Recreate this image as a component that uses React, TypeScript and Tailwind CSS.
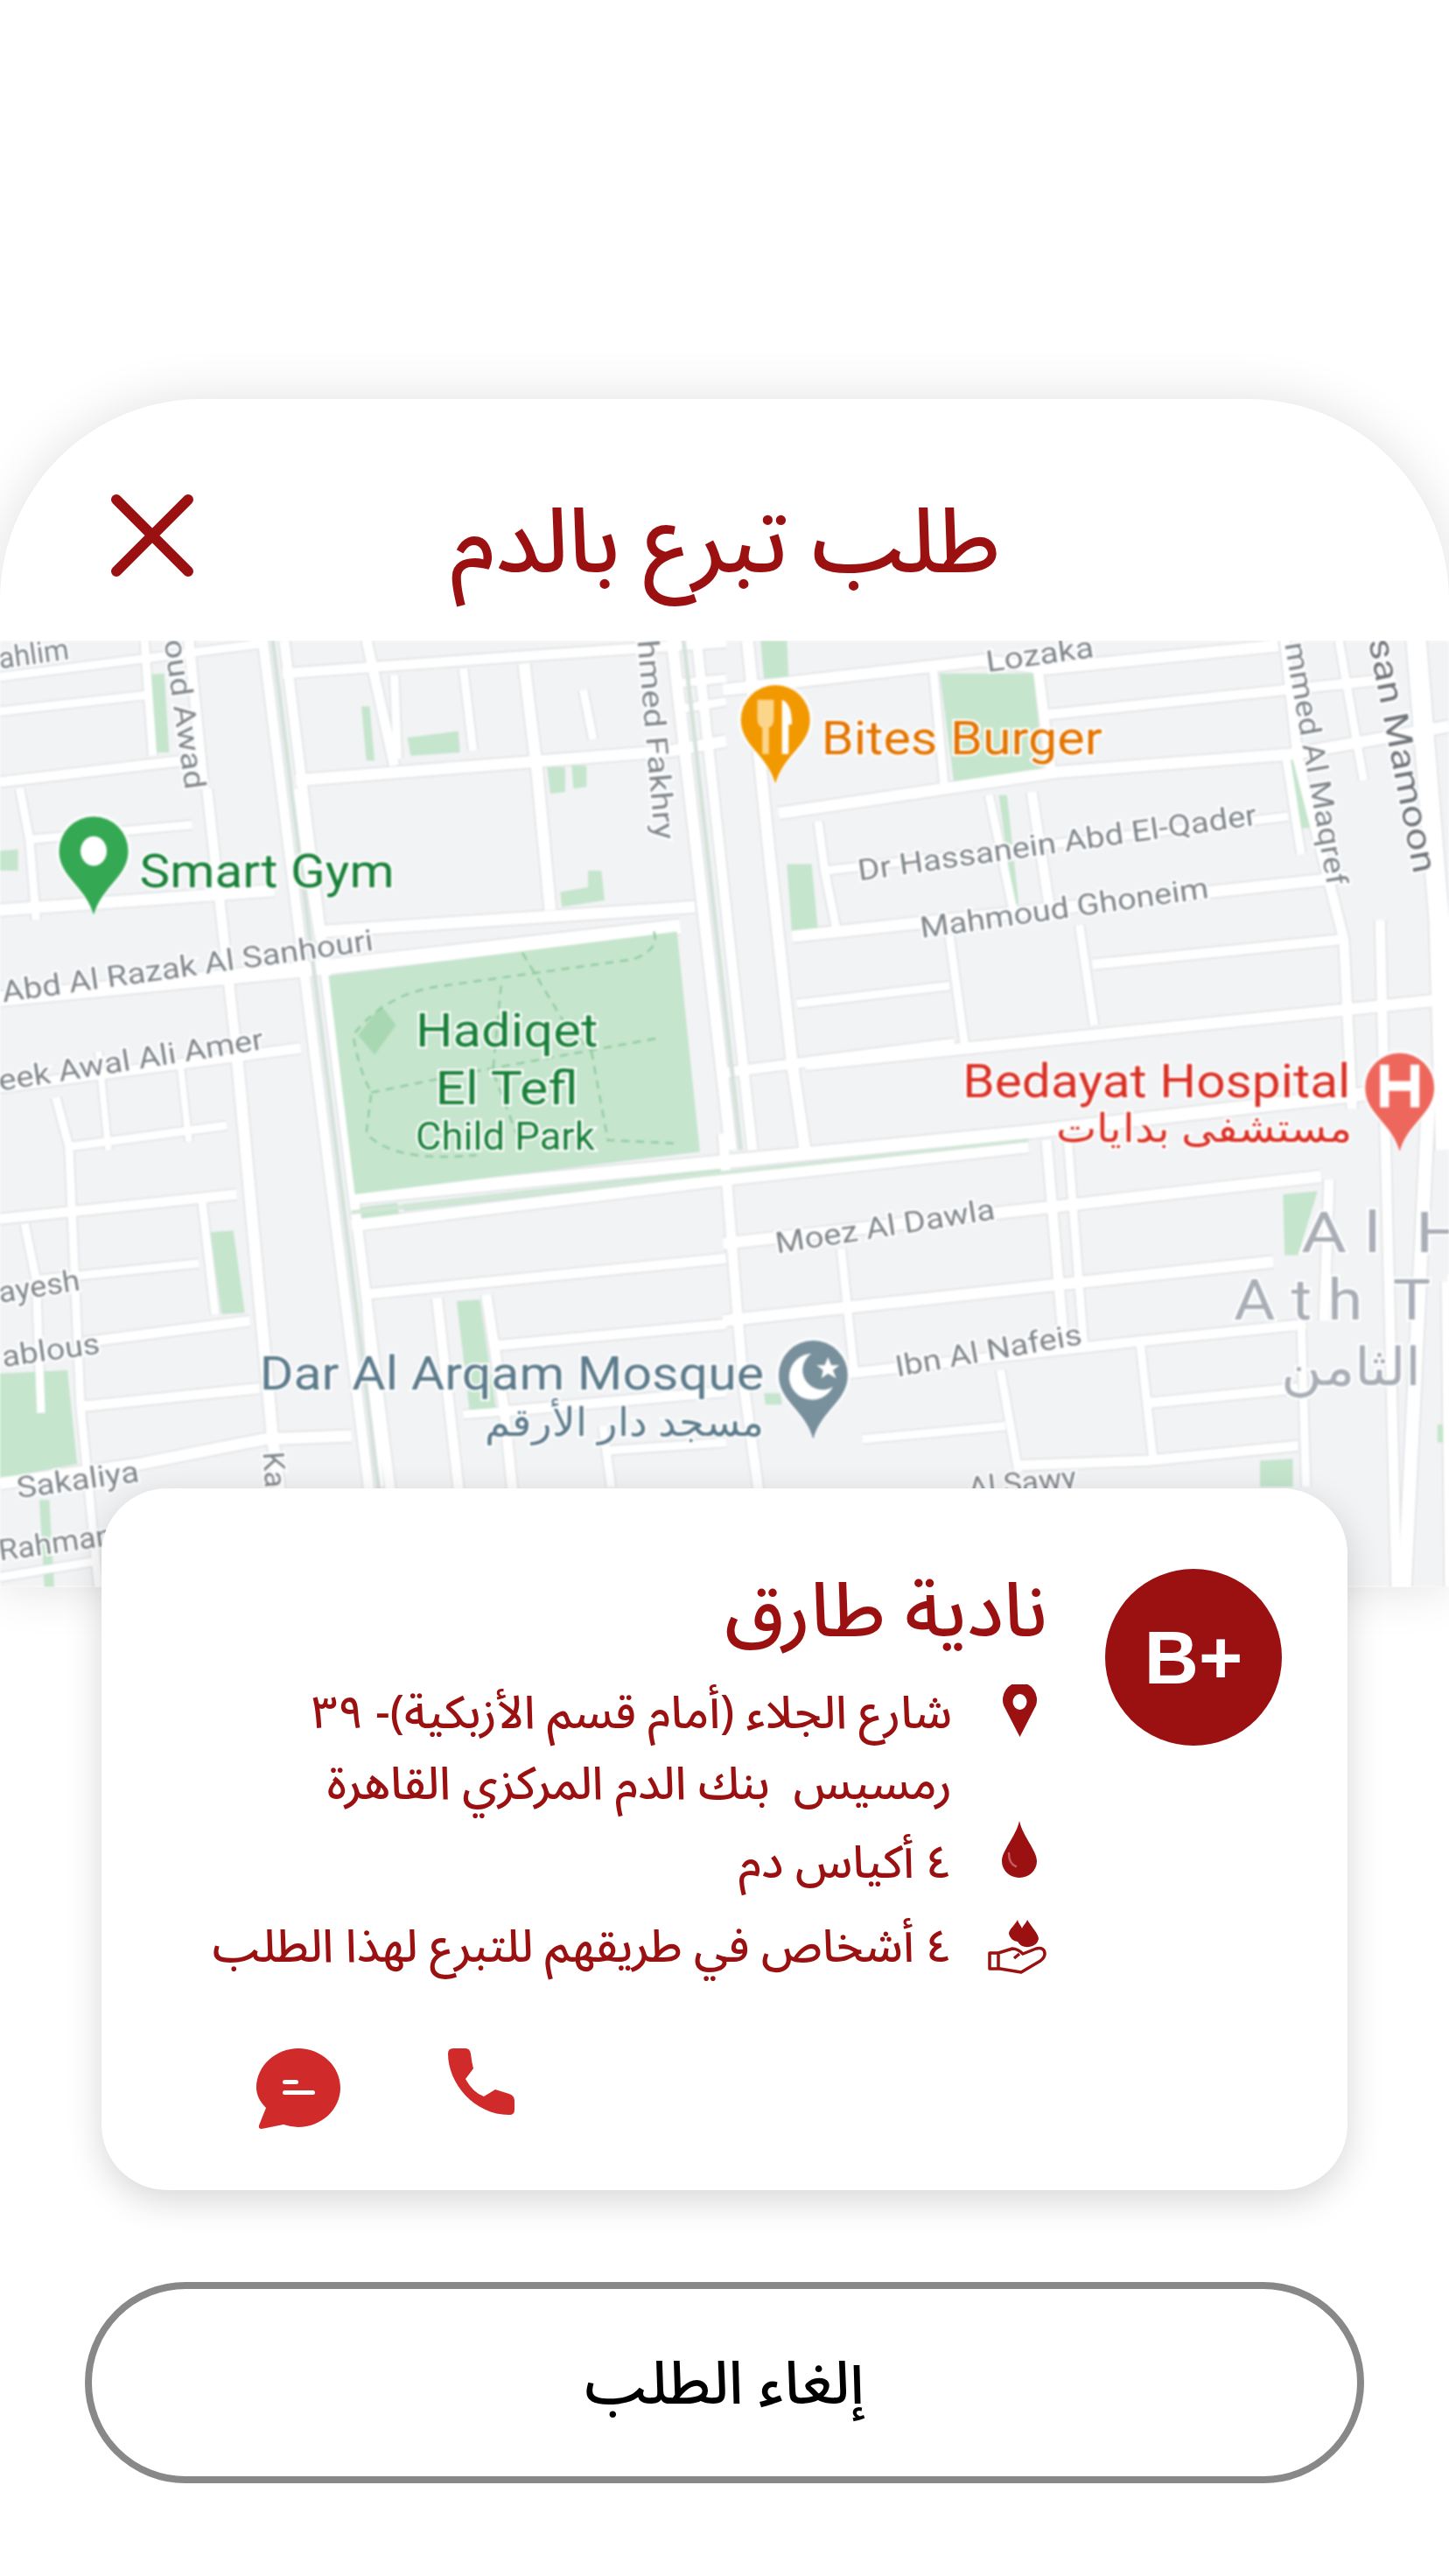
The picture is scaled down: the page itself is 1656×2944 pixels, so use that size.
const roads: [string, number][] = [
  // left side, running across
  ['0,412 158,392', 5], ['0,433 90,423', 5], ['0,476 120,462', 6], ['18,511 117,502', 5], ['0,554 167,542', 7],
  ['0,608 186,590 414,564', 9], ['0,662 183,638', 6], ['42,698 138,685', 5], ['0,742 144,727', 6], ['22,779 121,769', 5],
  ['51,817 152,804', 6], ['51,856 158,845', 6], ['0,903 85,891 161,876 214,874', 7], ['0,960 60,950', 5],
  // left side, running down
  ['88,390 93,460', 5], ['115,390 124,480', 6], ['12,480 18,511 22,560', 5], ['34,668 42,698 49,856 60,966', 5],
  ['123,731 131,800', 5], ['144,640 166,876 178,966', 7], ['15,745 22,779 25,860', 5], ['126,480 144,640', 6],
  ['60,640 66,700', 4], ['110,650 115,695', 4],
  // dual road through the middle left
  ['160,390 232,966', 6], ['173,390 245,966', 6],
  // upper middle
  ['172,410 310,400 442,391', 6], ['180,475 319,464 409,457 442,451', 7], ['195,567 423,552', 7],
  ['223,389 240,466', 6], ['319,404 327,470 335,554', 7], ['282,407 288,457', 5], ['355,420 361,450', 5], ['240,411 242,462', 5],
  ['180,480 195,572', 6], ['412,416 442,413', 5], ['417,431 442,427', 5],
  ['409,389 445,700', 7], ['424,389 458,700', 6],
  // wide road under the park
  ['214,729 442,707 626,689 882,660', 8], ['214,746 442,718 626,698', 7],
  ['220,788 442,766', 6], ['302,819 442,806', 6], ['307,859 442,847', 6], ['282,861 307,859', 5], ['369,883 442,878', 5],
  ['266,790 279,905 286,966', 6], ['296,788 307,859 318,966', 6], ['223,797 231,905', 5], ['367,868 372,905', 5],
  // upper right
  ['440,420 598,402 637,407 778,393', 7], ['637,435 849,413', 6], ['474,495 643,470 787,459 882,442', 7],
  ['502,530 784,497', 5], ['482,570 820,534', 7], ['485,611 578,600', 5], ['665,587 815,572', 6], ['490,648 815,615 882,608', 7],
  ['440,653 581,635', 6], ['455,390 468,517 482,646 490,700', 7], ['568,407 575,481', 5], ['632,409 640,471', 6],
  ['602,484 618,560', 5], ['628,482 640,560', 6], ['578,570 587,635', 5], ['657,563 666,624', 5],
  ['782,389 790,462 818,572 823,675', 6], ['815,390 830,475', 5], ['862,389 876,560 880,700', 12], ['840,560 850,966', 6],
  ['498,500 502,530 510,570', 5], ['783,462 792,520', 5],
  // lower right
  ['440,757 637,735 804,716', 7], ['440,804 643,782 775,768', 7], ['516,836 688,817 795,806', 6], ['699,854 790,845', 6],
  ['525,876 612,868', 5], ['618,892 699,889 790,880', 6], ['637,694 648,823', 6], ['650,694 660,823', 5],
  ['440,690 452,838 470,966', 6], ['609,834 620,896', 5], ['694,817 702,889', 5], ['792,804 795,905', 5], ['809,718 806,804', 6],
  ['870,660 855,966', 8], ['880,780 882,966', 5], ['512,760 520,836', 5],
];

const greens = [
  '87,411 100,410 103,458 93,458', '248,449 279,445 280,458 250,460', '333,467 344,467 344,482 335,483', '348,466 357,466 357,479 349,480',
  '358,530 366,530 368,548 342,552 341,543 358,540', '0,518 11,517 11,530 0,530', '220,430 225,430 228,463 223,463',
  '463,390 479,390 480,413 465,413', '572,410 629,410 635,471 581,479', '479,526 494,526 498,567 482,568', '785,462 792,461 801,504 792,504',
  '608,484 613,484 620,550 617,550', '128,750 142,749 149,799 135,800', '0,836 41,834 47,891 0,900', '278,792 292,791 302,858 286,860',
  '781,727 802,725 790,764 782,764', '767,889 787,888 787,905 767,905', '875,867 882,867 882,878 875,878', '24,913 30,913 33,966 27,966',
  '465,848 475,848 476,855 466,855', '218,735 242,732 243,740 219,743', '245,733 442,711 442,715 246,737',
];

const labels: { t: string; x: number; y: number; r: number; w: number; fs?: number; c?: string }[] = [
  { t: 'ahlim', x: 0, y: 407, r: -8, w: 43 },
  { t: 'oud Awad', x: 100, y: 390, r: 82, w: 92 },
  { t: 'hmed Fakhry', x: 388, y: 390, r: 85, w: 122 },
  { t: 'Lozaka', x: 601, y: 409, r: -8, w: 66 },
  { t: 'Dr Hassanein Abd El-Qader', x: 523, y: 536, r: -8, w: 245 },
  { t: 'Mahmoud Ghoneim', x: 561, y: 571, r: -8, w: 177 },
  { t: 'mmed Al Maqref', x: 782, y: 392, r: 80, w: 150 },
  { t: 'san Mamoon', x: 833, y: 390, r: 79, w: 145, fs: 21, c: '#70757a' },
  { t: 'Abd Al Razak Al Sanhouri', x: 2, y: 610, r: -8, w: 228 },
  { t: 'eek Awal Ali Amer', x: 0, y: 664, r: -9, w: 163 },
  { t: 'ayesh', x: 0, y: 793, r: -9, w: 50 },
  { t: 'ablous', x: 2, y: 832, r: -8, w: 60 },
  { t: 'Sakaliya', x: 11, y: 912, r: -8, w: 75 },
  { t: 'Rahman', x: 0, y: 950, r: -8, w: 70 },
  { t: 'Ka', x: 160, y: 884, r: 86, w: 22 },
  { t: 'Moez Al Dawla', x: 473, y: 763, r: -9, w: 135 },
  { t: 'Ibn Al Nafeis', x: 546, y: 838, r: -10, w: 115 },
  { t: 'Al Sawy', x: 590, y: 912, r: -6, w: 66 },
];

const places: { t: string; x: number; y: number; w: number; fs: number; c: string }[] = [
  { t: 'Smart Gym', x: 85, y: 540, w: 155, fs: 29, c: '#188038' },
  { t: 'Bites Burger', x: 500, y: 459, w: 171, fs: 29, c: '#e37400' },
  { t: 'Hadiqet', x: 253, y: 637, w: 111, fs: 29, c: '#188038' },
  { t: 'El Tefl', x: 265, y: 672, w: 87, fs: 29, c: '#188038' },
  { t: 'Child Park', x: 253, y: 700, w: 109, fs: 24, c: '#188038' },
  { t: 'Bedayat Hospital', x: 586, y: 668, w: 236, fs: 29, c: '#d93025' },
  { t: 'مستشفى بدايات', x: 643, y: 695, w: 180, fs: 24, c: '#d93025' },
  { t: 'Dar Al Arqam Mosque', x: 158, y: 846, w: 307, fs: 29, c: '#5b7a8a' },
  { t: 'مسجد دار الأرقم', x: 295, y: 874, w: 170, fs: 24, c: '#5b7a8a' },
  { t: 'A l  H', x: 792, y: 762, w: 100, fs: 35, c: '#a9aeb6' },
  { t: 'A t h  T h', x: 751, y: 803, w: 150, fs: 35, c: '#a9aeb6' },
  { t: 'الثامن', x: 780, y: 843, w: 85, fs: 32, c: '#a9aeb6' },
];

const Pin = ({ x, y, fill, children }: { x: number; y: number; fill: string; children?: React.ReactNode }) => (
  <g transform={`translate(${x} ${y})`}>
    <path d="M21 62 C17 44 -2 38 -2 21 A23 23 0 0 1 44 21 C44 38 25 44 21 62Z" fill="#fff" opacity="0.7" />
    <path d="M21 60 C16 42 0 37 0 21 A21 21 0 0 1 42 21 C42 37 26 42 21 60Z" fill={fill} />
    {children}
  </g>
);

const MapView = () => (
  <svg viewBox="0 390 882 576" className="block h-[1082px] w-[1656px] blur-[0.8px] font-['Roboto',sans-serif]">
    <rect x="0" y="390" width="882" height="576" fill="#f2f3f5" />
    {roads.map(([p, w]) => (
      <polyline key={'e' + p} points={p} fill="none" stroke="#e3e5e8" strokeWidth={w + 2} />
    ))}
    {greens.map((p) => (
      <polygon key={p} points={p} fill="#c5e5cd" />
    ))}
    {roads.map(([p, w]) => (
      <polyline key={'r' + p} points={p} fill="none" stroke="#ffffff" strokeWidth={w} />
    ))}
    <polygon points="200,594 412,567 426,701 216,727" fill="#c5e5cd" />
    <polyline points="166,390 238,966" fill="none" stroke="#d5e2da" strokeWidth="2.5" />
    <polyline points="214,738 626,694" fill="none" stroke="#d3e6d8" strokeWidth="2.5" />
    <polyline points="416,389 451,700" fill="none" stroke="#d5e2da" strokeWidth="2.5" />
    <polygon points="232,612 241,624 228,642 218,630" fill="#a8d8b1" />
    <g fill="none" stroke="#92cc9f" strokeWidth="1.3" strokeDasharray="5 4">
      <path d="M398 567 Q402 578 385 584 L270 600 Q235 604 215 630 Q218 650 226 665 L223 690 Q240 708 290 703" />
      <path d="M226 665 L290 652 L400 632 M318 580 L345 625 L360 640 M305 600 L300 652 L318 700 M360 640 L370 694 L412 696" />
    </g>
    {labels.map((l) => (
      <text
        key={l.t}
        transform={`translate(${l.x} ${l.y}) rotate(${l.r})`}
        fontSize={l.fs ?? 18}
        fill={l.c ?? '#80868b'}
        stroke="#ffffff"
        strokeWidth="2.5"
        paintOrder="stroke"
        textLength={l.w}
        lengthAdjust="spacingAndGlyphs"
      >
        {l.t}
      </text>
    ))}
    {places.map((l) => (
      <text
        key={l.t}
        x={l.x}
        y={l.y}
        fontSize={l.fs}
        fill={l.c}
        stroke="#ffffff"
        strokeWidth="2.5"
        paintOrder="stroke"
        textLength={l.w}
        lengthAdjust="spacingAndGlyphs"
        xmlSpace="preserve"
      >
        {l.t}
      </text>
    ))}
    <Pin x={36} y={497} fill="#34a853">
      <ellipse cx="21" cy="21" rx="8" ry="9" fill="#fff" />
    </Pin>
    <Pin x={451} y={417} fill="#f29900">
      <path d="M10 9 H20 V20 Q20 25 17 26 V42 H13 V26 Q10 25 10 20Z" fill="#fbd58a" />
      <path d="M25 9 Q31 11 31 24 H29 V42 H25Z" fill="#fff" />
    </Pin>
    <Pin x={831} y={641} fill="#ee675c">
      <path d="M9 7 H14.5 V17 H27.5 V7 H33 V33 H27.5 V23 H14.5 V33 H9Z" fill="#fff" />
    </Pin>
    <Pin x={474} y={816} fill="#78909c">
      <path d="M20 8 A14 14 0 1 0 33 28 A11 11 0 1 1 20 8Z" fill="#fff" />
      <path d="M30 10 L32 15 L37 15 L33 18 L35 23 L30 20 L26 23 L27 18 L23 15 L28 15Z" fill="#fff" />
    </Pin>
  </svg>
);

const PinIcon = () => (
  <svg viewBox="0 0 41 60" className="h-[60px] w-[41px]">
    <path fillRule="evenodd" d="M20.5 60 L2 24 A19.5 20 0 1 1 39 24Z M20.5 11 A8 9 0 1 0 20.5 29 A8 9 0 1 0 20.5 11Z" fill="#9b1111" />
  </svg>
);

const DropIcon = () => (
  <svg viewBox="0 0 40 65" className="h-[65px] w-[40px]">
    <path d="M20 0 C24 18 40 34 40 46 A20 19 0 0 1 0 46 C0 34 16 18 20 0Z" fill="#9b1111" />
    <path d="M8 37 Q8 49 16 52" fill="none" stroke="#c9585f" strokeWidth="2.5" strokeLinecap="round" />
  </svg>
);

const HandIcon = () => (
  <svg viewBox="0 0 68 62" className="h-[62px] w-[68px]">
    <path d="M34 0 C35 5 38 6 39 10 C41 5 44 4 45 0 C49 7 58 16 58 22 A13 12 0 0 1 34 25 A11 11 0 0 1 24 16 C24 11 31 6 34 0Z" fill="#9b1111" />
    <path d="M2 38 H12 L28 33 Q34 33 40 39 L55 33 Q65 31 65 39 Q65 43 60 47 L38 60 L14 56 H2Z M12 38 V56 M36 39 L30 44" fill="none" stroke="#9b1111" strokeWidth="3.5" strokeLinejoin="round" />
  </svg>
);

const ChatIcon = () => (
  <svg viewBox="0 0 96 92" className="h-[92px] w-[96px]">
    <path d="M48 0 C74 0 96 20 96 45 C96 70 74 90 48 90 Q40 90 31 87 L6 92 Q2 92 3 88 L11 68 C4 61 0 53 0 45 C0 20 22 0 48 0Z" fill="#d12a2a" />
    <rect x="30" y="36" width="18" height="5" rx="2.5" fill="#fff" />
    <rect x="30" y="48" width="37" height="5" rx="2.5" fill="#fff" />
  </svg>
);

const PhoneIcon = () => (
  <svg viewBox="0 0 76 76" className="h-[76px] w-[76px]">
    <path d="M0 6 Q0 0 6 0 H20 Q25 0 26 6 Q27 16 29 23 L20 35 Q28 50 41 55 L54 47 L70 52 Q76 54 76 60 V70 Q76 76 70 76 C30 76 0 40 0 6Z" fill="#d12a2a" />
  </svg>
);

const InfoRow = ({ icon, className, children }: { icon: React.ReactNode; className: string; children: React.ReactNode }) => (
  <div className={`flex items-center ${className}`}>
    <div className="flex w-[109px] shrink-0 justify-start">{icon}</div>
    <div className="text-[52px] leading-[81px] font-medium text-[#9b1111] whitespace-pre">{children}</div>
  </div>
);

export default function App() {
  return (
    <div dir="rtl" className="h-[2944px] w-[1656px] overflow-hidden bg-white pt-[456px] font-['Noto_Sans_Arabic','Noto_Sans','DejaVu_Sans',sans-serif]">
      <div className="rounded-t-[230px] bg-white shadow-[0_0_60px_rgba(0,0,0,0.12)]">
        <header className="relative flex h-[276px] items-center justify-center">
          <h1 className="mt-[54px] mr-[-2px] text-[102px] leading-none font-medium text-[#9b1111]">طلب تبرع بالدم</h1>
          <button className="absolute top-[108px] left-[126px]">
            <svg viewBox="0 0 96 96" className="block h-[96px] w-[96px]">
              <path d="M7 7 L89 89 M89 7 L7 89" stroke="#9b1111" strokeWidth="12" strokeLinecap="round" />
            </svg>
          </button>
        </header>
        <div dir="ltr" className="overflow-hidden">
          <MapView />
        </div>
      </div>

      <div className="relative mx-[116px] mt-[-113px] flex h-[802px] rounded-[75px] bg-white pt-[92px] pr-[75px] shadow-[0_12px_40px_rgba(0,0,0,0.16)]">
        <div className="flex h-[202px] w-[202px] shrink-0 items-center justify-center rounded-full bg-[#9b1111] font-['Liberation_Sans',sans-serif] text-[86px] font-bold text-white">
          <span dir="ltr">B+</span>
        </div>
        <div className="mr-[66px] flex-1">
          <h2 className="h-[125px] text-[86px] leading-[100px] font-medium text-[#9b1111]">نادية طارق</h2>
          <InfoRow icon={<span className="mr-[11px] mt-[-74px]"><PinIcon /></span>} className="h-[162px]">
            {'شارع الجلاء (أمام قسم الأزبكية)- ٣٩\nرمسيس  بنك الدم المركزي القاهرة'}
          </InfoRow>
          <InfoRow icon={<span className="mr-[12px] mt-[-32px]"><DropIcon /></span>} className="h-[98px]">٤ أكياس دم</InfoRow>
          <InfoRow icon={<HandIcon />} className="h-[94px]">٤ أشخاص في طريقهم للتبرع لهذا الطلب</InfoRow>
          <div className="mt-[69px] mr-[609px] flex gap-[123px]">
            <PhoneIcon />
            <ChatIcon />
          </div>
        </div>
      </div>

      <button className="mx-[97px] mt-[105px] flex h-[230px] w-[1462px] items-center justify-center rounded-full border-[8px] border-[#888888] bg-white pt-[6px] text-[68px] font-medium text-black">
        إلغاء الطلب
      </button>
    </div>
  );
}
